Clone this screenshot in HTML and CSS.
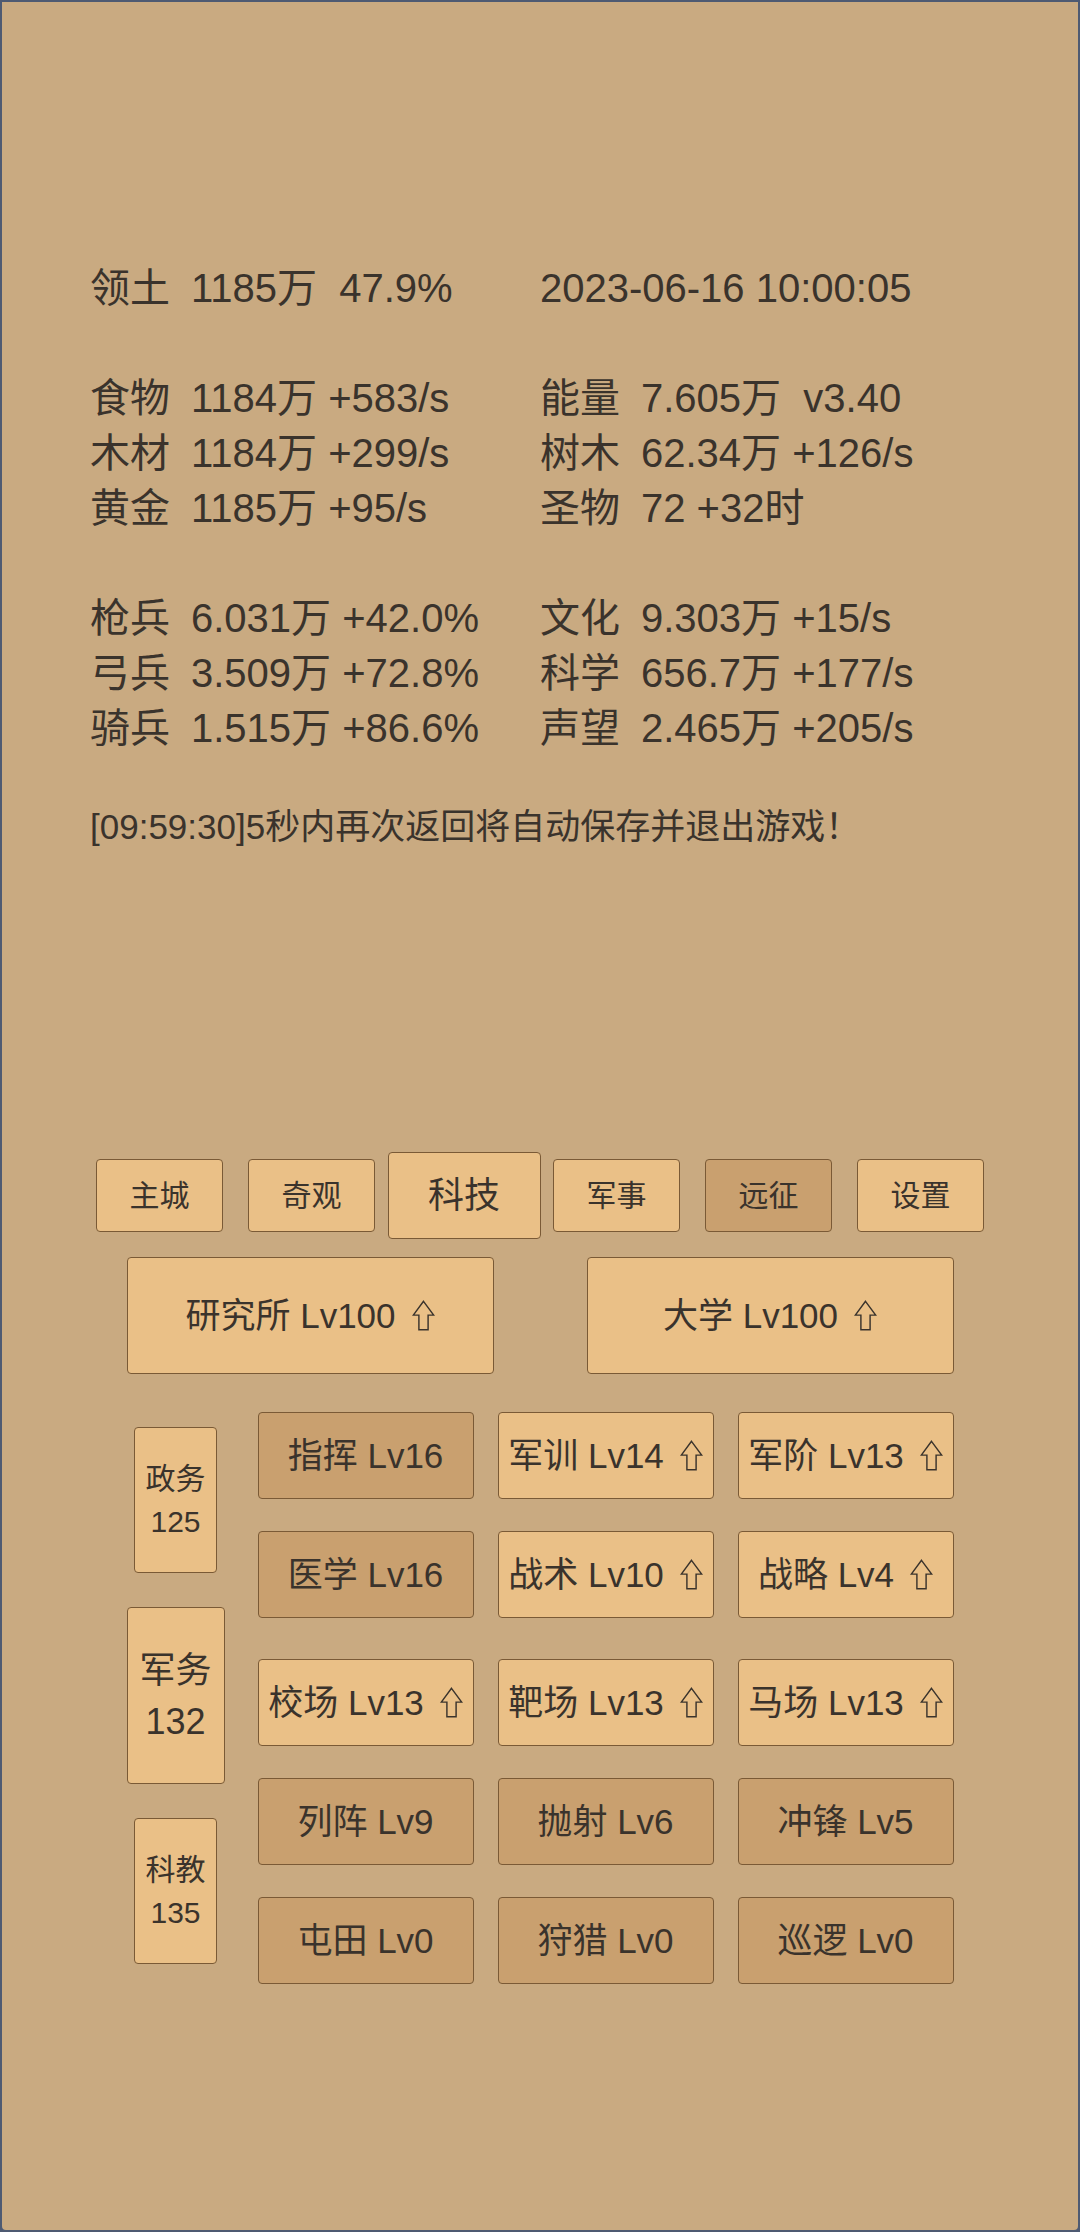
FILE: index.html
```html
<!DOCTYPE html>
<html lang="zh">
<head>
    <meta charset="UTF-8">
    <meta name="viewport" content="width=device-width, initial-scale=1.0">
    <title>科技</title>
    <link rel="stylesheet" href="styles.css">
</head>
<body>
    <svg class="defs" width="0" height="0">
        <symbol id="up" viewBox="0 0 24 32">
            <path d="M12 1.2 22.6 15.6H16.8V30.8H7.2V15.6H1.4Z"/>
        </symbol>
    </svg>

    <div class="screen">
        <!-- 资源信息 -->
        <div class="stats">
            <div><span class="label">领土</span>1185万  47.9%</div>
            <div>2023-06-16 10:00:05</div>
            <div class="blank"></div>
            <div><span class="label">食物</span>1184万 +583/s</div>
            <div><span class="label">能量</span>7.605万  v3.40</div>
            <div><span class="label">木材</span>1184万 +299/s</div>
            <div><span class="label">树木</span>62.34万 +126/s</div>
            <div><span class="label">黄金</span>1185万 +95/s</div>
            <div><span class="label">圣物</span>72 +32时</div>
            <div class="blank"></div>
            <div><span class="label">枪兵</span>6.031万 +42.0%</div>
            <div><span class="label">文化</span>9.303万 +15/s</div>
            <div><span class="label">弓兵</span>3.509万 +72.8%</div>
            <div><span class="label">科学</span>656.7万 +177/s</div>
            <div><span class="label">骑兵</span>1.515万 +86.6%</div>
            <div><span class="label">声望</span>2.465万 +205/s</div>
        </div>

        <div class="message">[09:59:30]5秒内再次返回将自动保存并退出游戏！</div>

        <!-- 页签 -->
        <div class="tabs">
            <div class="tab">主城</div>
            <div class="tab">奇观</div>
            <div class="tab active">科技</div>
            <div class="tab">军事</div>
            <div class="tab dark">远征</div>
            <div class="tab">设置</div>
        </div>

        <div class="buildings">
            <div class="building">研究所 Lv100<svg class="up"><use href="#up"/></svg></div>
            <div class="building">大学 Lv100<svg class="up"><use href="#up"/></svg></div>
        </div>

        <!-- 科技列表 -->
        <div class="tech">
            <div class="depts">
                <div class="dept"><span>政务</span><span>125</span></div>
                <div class="dept active"><span>军务</span><span>132</span></div>
                <div class="dept"><span>科教</span><span>135</span></div>
            </div>

            <div class="tech-list">
                <div class="tech-group">
                    <div class="cell dark">指挥 Lv16</div>
                    <div class="cell">军训 Lv14<svg class="up"><use href="#up"/></svg></div>
                    <div class="cell">军阶 Lv13<svg class="up"><use href="#up"/></svg></div>
                    <div class="cell dark">医学 Lv16</div>
                    <div class="cell">战术 Lv10<svg class="up"><use href="#up"/></svg></div>
                    <div class="cell">战略 Lv4<svg class="up"><use href="#up"/></svg></div>
                </div>
                <div class="tech-group">
                    <div class="cell">校场 Lv13<svg class="up"><use href="#up"/></svg></div>
                    <div class="cell">靶场 Lv13<svg class="up"><use href="#up"/></svg></div>
                    <div class="cell">马场 Lv13<svg class="up"><use href="#up"/></svg></div>
                    <div class="cell dark">列阵 Lv9</div>
                    <div class="cell dark">抛射 Lv6</div>
                    <div class="cell dark">冲锋 Lv5</div>
                    <div class="cell dark">屯田 Lv0</div>
                    <div class="cell dark">狩猎 Lv0</div>
                    <div class="cell dark">巡逻 Lv0</div>
                </div>
            </div>
        </div>
    </div>
</body>
</html>
```

FILE: styles.css
```css
* {
    margin: 0;
    padding: 0;
    box-sizing: border-box;
}
html, body {
    height: 100%;
    background: #4e5a72;
    overflow: hidden;
}
body {
    font-family: "Liberation Sans", "Noto Sans CJK SC", sans-serif;
    color: #3a332c;
}
.defs {
    position: absolute;
}
.screen {
    height: 2232px;
    border: 2px solid #4e5a72;
    border-radius: 0 0 6px 6px;
    background: #c9aa81;
    display: flex;
    flex-direction: column;
}
.stats {
    display: grid;
    grid-template-columns: 450px 1fr;
    padding: 259px 0 0 88px;
    font-size: 40px;
    line-height: 55px;
    white-space: pre;
}
.stats .blank {
    grid-column: span 2;
    height: 55px;
}
.label {
    display: inline-block;
    width: 101px;
}
.message {
    margin-top: 50px;
    padding-left: 88px;
    font-size: 35px;
    line-height: 42px;
}

/* кнопки */
.tab, .building, .dept, .cell {
    background: #eac087;
    border: 1px solid #7a5a36;
    border-radius: 4px;
    display: flex;
    justify-content: center;
    align-items: center;
}
.dark {
    background: #c9a06f;
}
.tabs {
    margin-top: 304px;
    display: flex;
    justify-content: center;
    align-items: center;
    height: 87px;
}
.tab {
    width: 127px;
    height: 73px;
    margin: 0 12.5px;
    font-size: 30px;
    line-height: 36px;
}
.tab.active {
    width: 153px;
    height: 87px;
    margin: 0;
    font-size: 36px;
    line-height: 44px;
}
.buildings {
    margin-top: 18px;
    display: flex;
    justify-content: center;
    gap: 93px;
}
.building {
    width: 367px;
    height: 117px;
    font-size: 35px;
    line-height: 40px;
}
.up {
    width: 23px;
    height: 31px;
    margin-left: 16px;
    vertical-align: -2px;
    fill: none;
    stroke: #3a332c;
    stroke-width: 1.5;
}
.tech {
    margin-top: 38px;
    display: flex;
    justify-content: center;
    align-items: flex-start;
    gap: 33px;
}
.depts {
    width: 98px;
    margin-top: 15px;
    display: flex;
    flex-direction: column;
    align-items: center;
    gap: 34px;
}
.dept {
    width: 83px;
    height: 146px;
    flex-direction: column;
    font-size: 30px;
    line-height: 43px;
}
.dept.active {
    width: 98px;
    height: 177px;
    font-size: 36px;
    line-height: 51px;
}
.tech-list {
    display: flex;
    flex-direction: column;
    gap: 41px;
}
.tech-group {
    display: grid;
    grid-template-columns: repeat(3, 216px);
    gap: 32px 24px;
}
.cell {
    height: 87px;
    font-size: 35px;
    line-height: 40px;
}
```
